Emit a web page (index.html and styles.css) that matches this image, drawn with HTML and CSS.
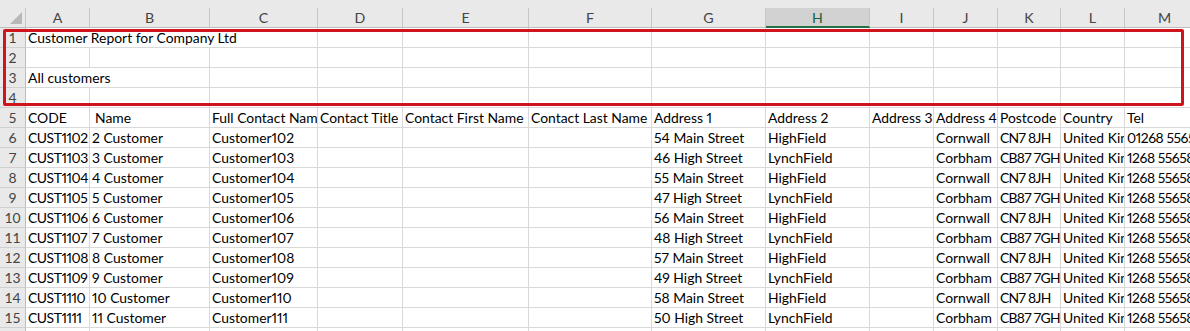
FILE: index.html
```html
<!DOCTYPE html>
<html>
<head>
<meta charset="utf-8">
<link rel="stylesheet" href="styles.css">
</head>
<body>
<div class="sheet">
  <div class="colhead">
    <div class="corner"><span class="tri"></span></div>
    <div class="ch">A</div><div class="ch">B</div><div class="ch">C</div><div class="ch">D</div><div class="ch">E</div><div class="ch">F</div><div class="ch">G</div><div class="ch sel">H</div><div class="ch">I</div><div class="ch">J</div><div class="ch">K</div><div class="ch">L</div><div class="ch">M</div>
  </div>

  <div class="row">
    <div class="rh">1</div><div class="c span3">Customer Report for Company Ltd</div><div class="c"></div><div class="c"></div><div class="c"></div><div class="c"></div><div class="c"></div><div class="c"></div><div class="c"></div><div class="c"></div><div class="c"></div><div class="c"></div>
  </div>
  <div class="row">
    <div class="rh">2</div><div class="c"></div><div class="c"></div><div class="c"></div><div class="c"></div><div class="c"></div><div class="c"></div><div class="c"></div><div class="c"></div><div class="c"></div><div class="c"></div><div class="c"></div><div class="c"></div><div class="c"></div>
  </div>
  <div class="row">
    <div class="rh">3</div><div class="c span2">All customers</div><div class="c"></div><div class="c"></div><div class="c"></div><div class="c"></div><div class="c"></div><div class="c"></div><div class="c"></div><div class="c"></div><div class="c"></div><div class="c"></div><div class="c"></div>
  </div>
  <div class="row">
    <div class="rh">4</div><div class="c"></div><div class="c"></div><div class="c"></div><div class="c"></div><div class="c"></div><div class="c"></div><div class="c"></div><div class="c"></div><div class="c"></div><div class="c"></div><div class="c"></div><div class="c"></div><div class="c"></div>
  </div>
  <div class="row">
    <div class="rh">5</div><div class="c">CODE</div><div class="c lead">Name</div><div class="c">Full Contact Name</div><div class="c">Contact Title</div><div class="c">Contact First Name</div><div class="c">Contact Last Name</div><div class="c">Address 1</div><div class="c">Address 2</div><div class="c">Address 3</div><div class="c">Address 4</div><div class="c">Postcode</div><div class="c">Country</div><div class="c">Tel</div>
  </div>
  <div class="row">
    <div class="rh">6</div><div class="c n">CUST1102</div><div class="c">2 Customer</div><div class="c">Customer102</div><div class="c"></div><div class="c"></div><div class="c"></div><div class="c">54 Main Street</div><div class="c">HighField</div><div class="c"></div><div class="c">Cornwall</div><div class="c pc">CN7 8JH</div><div class="c">United Kingdom</div><div class="c n">01268 556585</div>
  </div>
  <div class="row">
    <div class="rh">7</div><div class="c n">CUST1103</div><div class="c">3 Customer</div><div class="c">Customer103</div><div class="c"></div><div class="c"></div><div class="c"></div><div class="c">46 High Street</div><div class="c">LynchField</div><div class="c"></div><div class="c">Corbham</div><div class="c pc">CB87 7GH</div><div class="c">United Kingdom</div><div class="c n">1268 556585</div>
  </div>
  <div class="row">
    <div class="rh">8</div><div class="c n">CUST1104</div><div class="c">4 Customer</div><div class="c">Customer104</div><div class="c"></div><div class="c"></div><div class="c"></div><div class="c">55 Main Street</div><div class="c">HighField</div><div class="c"></div><div class="c">Cornwall</div><div class="c pc">CN7 8JH</div><div class="c">United Kingdom</div><div class="c n">1268 556585</div>
  </div>
  <div class="row">
    <div class="rh">9</div><div class="c n">CUST1105</div><div class="c">5 Customer</div><div class="c">Customer105</div><div class="c"></div><div class="c"></div><div class="c"></div><div class="c">47 High Street</div><div class="c">LynchField</div><div class="c"></div><div class="c">Corbham</div><div class="c pc">CB87 7GH</div><div class="c">United Kingdom</div><div class="c n">1268 556585</div>
  </div>
  <div class="row">
    <div class="rh">10</div><div class="c n">CUST1106</div><div class="c">6 Customer</div><div class="c">Customer106</div><div class="c"></div><div class="c"></div><div class="c"></div><div class="c">56 Main Street</div><div class="c">HighField</div><div class="c"></div><div class="c">Cornwall</div><div class="c pc">CN7 8JH</div><div class="c">United Kingdom</div><div class="c n">1268 556585</div>
  </div>
  <div class="row">
    <div class="rh">11</div><div class="c n">CUST1107</div><div class="c">7 Customer</div><div class="c">Customer107</div><div class="c"></div><div class="c"></div><div class="c"></div><div class="c">48 High Street</div><div class="c">LynchField</div><div class="c"></div><div class="c">Corbham</div><div class="c pc">CB87 7GH</div><div class="c">United Kingdom</div><div class="c n">1268 556585</div>
  </div>
  <div class="row">
    <div class="rh">12</div><div class="c n">CUST1108</div><div class="c">8 Customer</div><div class="c">Customer108</div><div class="c"></div><div class="c"></div><div class="c"></div><div class="c">57 Main Street</div><div class="c">HighField</div><div class="c"></div><div class="c">Cornwall</div><div class="c pc">CN7 8JH</div><div class="c">United Kingdom</div><div class="c n">1268 556585</div>
  </div>
  <div class="row">
    <div class="rh">13</div><div class="c n">CUST1109</div><div class="c">9 Customer</div><div class="c">Customer109</div><div class="c"></div><div class="c"></div><div class="c"></div><div class="c">49 High Street</div><div class="c">LynchField</div><div class="c"></div><div class="c">Corbham</div><div class="c pc">CB87 7GH</div><div class="c">United Kingdom</div><div class="c n">1268 556585</div>
  </div>
  <div class="row">
    <div class="rh">14</div><div class="c n">CUST1110</div><div class="c">10 Customer</div><div class="c">Customer110</div><div class="c"></div><div class="c"></div><div class="c"></div><div class="c">58 Main Street</div><div class="c">HighField</div><div class="c"></div><div class="c">Cornwall</div><div class="c pc">CN7 8JH</div><div class="c">United Kingdom</div><div class="c n">1268 556585</div>
  </div>
  <div class="row">
    <div class="rh">15</div><div class="c n">CUST1111</div><div class="c">11 Customer</div><div class="c">Customer111</div><div class="c"></div><div class="c"></div><div class="c"></div><div class="c">50 High Street</div><div class="c">LynchField</div><div class="c"></div><div class="c">Corbham</div><div class="c pc">CB87 7GH</div><div class="c">United Kingdom</div><div class="c n">1268 556585</div>
  </div>
  <div class="row">
    <div class="rh"></div><div class="c"></div><div class="c"></div><div class="c"></div><div class="c"></div><div class="c"></div><div class="c"></div><div class="c"></div><div class="c"></div><div class="c"></div><div class="c"></div><div class="c"></div><div class="c"></div><div class="c"></div>
  </div>

  <div class="highlight"></div>
</div>
</body>
</html>
```

FILE: styles.css
```css
html, body {
  margin: 0;
  padding: 0;
  background: #ffffff;
  overflow: hidden;
}

.sheet {
  position: relative;
  width: 1190px;
  height: 331px;
  overflow: hidden;
  font-family: Lato, "Liberation Sans", sans-serif;
  font-size: 13.9px;
  color: #000000;
}

.colhead,
.row {
  display: grid;
  grid-template-columns: 26px 64px 120px 108px 85px 126px 123px 114px 104px 64px 64px 63px 64px 80px;
}

.colhead {
  background: #e9e9e9;
  padding-top: 8px;
}

.corner {
  position: relative;
  height: 20px;
  box-sizing: border-box;
  border-right: 1px solid #c6c6c6;
  border-bottom: 1px solid #bdbdbd;
}

.tri {
  position: absolute;
  left: 10px;
  top: 4px;
  width: 0;
  height: 0;
  border-left: 12px solid transparent;
  border-bottom: 12px solid #b8b8b8;
}

.ch {
  height: 20px;
  box-sizing: border-box;
  border-right: 1px solid #c6c6c6;
  border-bottom: 1px solid #bdbdbd;
  text-align: center;
  line-height: 19px;
  color: #444444;
  font-size: 14.2px;
}

.ch.sel {
  background: #d2d2d2;
  color: #1f5f3a;
  border-bottom: 2px solid #217346;
}

.rh {
  height: 20px;
  box-sizing: border-box;
  background: #e9e9e9;
  border-right: 1px solid #bdbdbd;
  border-bottom: 1px solid #d0d0d0;
  text-align: center;
  line-height: 19px;
  color: #444444;
}

.c {
  height: 20px;
  box-sizing: border-box;
  border-right: 1px solid #d9d9d9;
  border-bottom: 1px solid #d9d9d9;
  padding-left: 2px;
  line-height: 19px;
  white-space: nowrap;
  overflow: hidden;
  font-variant-numeric: proportional-nums;
}

.c.n {
  letter-spacing: -0.45px;
}

.c.pc {
  letter-spacing: -0.7px;
}

.c.lead {
  padding-left: 5px;
}

.span2 {
  grid-column: span 2;
}

.span3 {
  grid-column: span 3;
}

.highlight {
  position: absolute;
  left: 3px;
  top: 29px;
  width: 1181px;
  height: 77px;
  box-sizing: border-box;
  border: 3px solid #d0141c;
  border-radius: 2px;
}
```
